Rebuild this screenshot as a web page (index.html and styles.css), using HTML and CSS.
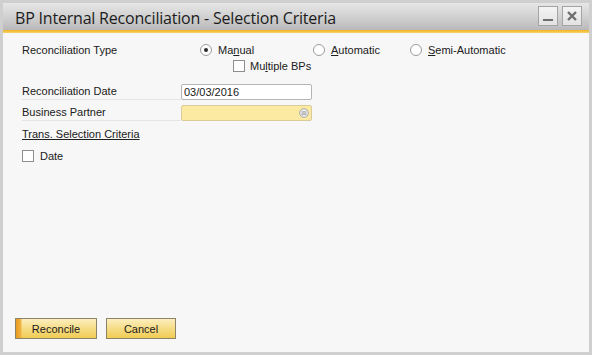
FILE: index.html
```html
<!DOCTYPE html>
<html lang="en">

<head>
    <meta charset="UTF-8">
    <title>BP Internal Reconciliation - Selection Criteria</title>
    <link rel="stylesheet" href="styles.css">
</head>

<body>
    <div class="window">
        <div class="titlebar">
            <span class="title">BP Internal Reconciliation - Selection Criteria</span>
            <div class="winbtns">
                <span class="winbtn min"></span>
                <span class="winbtn close">
                    <svg width="12" height="12" viewBox="0 0 12 12">
                        <path d="M2 2 L10 10 M10 2 L2 10" stroke="#6e6e6e" stroke-width="2.4" />
                    </svg>
                </span>
            </div>
        </div>
        <div class="accent"></div>

        <div class="content">
            <div class="row">
                <span class="label">Reconciliation Type</span>
                <span class="radio r1"><i class="dot on"></i>Ma<u>n</u>ual</span>
                <span class="radio r2"><i class="dot"></i><u>A</u>utomatic</span>
                <span class="radio"><i class="dot"></i><u>S</u>emi-Automatic</span>
            </div>
            <div class="row multi">
                <span class="check"><i class="box"></i>Mu<u>l</u>tiple BPs</span>
            </div>
            <div class="row field date">
                <span class="label line">Reconciliation Date</span>
                <span class="input">03/03/2016</span>
            </div>
            <div class="row field bp">
                <span class="label line">Business Partner</span>
                <span class="input yellow">
                    <svg class="cfl" width="10" height="10" viewBox="0 0 10 10">
                        <circle cx="5" cy="5" r="4.3" fill="#eeeeee" stroke="#a9a9a9" stroke-width="1" />
                        <path d="M2.5 3.8 H7.5 M2.5 5.2 H7.5 M2.5 6.6 H7.5" stroke="#9a9a9a" stroke-width="0.8" />
                    </svg>
                </span>
            </div>
            <div class="row crit">
                <span class="link">Trans. Selection Criteria</span>
            </div>
            <div class="row datechk">
                <span class="check"><i class="box"></i>Date</span>
            </div>
        </div>

        <div class="footer">
            <button class="btn default">Reconcile</button>
            <button class="btn">Cancel</button>
        </div>
    </div>
</body>

</html>
```

FILE: styles.css
```css
* {
    box-sizing: border-box;
    margin: 0;
    padding: 0;
}
body {
    background-color: #ffffff;
    font-family: "Liberation Sans", Arial, sans-serif;
    font-size: 11px;
    color: #202020;
}
.window {
    width: 592px;
    height: 355px;
    border: solid 3px #cfcfcf;
    background-color: #f7f7f7;
    display: flex;
    flex-direction: column;
}
.titlebar {
    height: 27px;
    display: flex;
    align-items: center;
    justify-content: space-between;
    padding-left: 12px;
    padding-right: 7px;
    background: linear-gradient(#e6e6e6, #cfcfcf 55%, #b9b9b9);
}
.title {
    font-family: "Open Sans", sans-serif;
    font-size: 16px;
    color: #1c1c1c;
    letter-spacing: -0.2px;
    padding-top: 2px;
}
.winbtns {
    display: flex;
    gap: 4px;
    align-self: flex-start;
    margin-top: 3px;
}
.winbtn {
    width: 20px;
    height: 20px;
    border: solid 1px #a4a4a4;
    background: linear-gradient(#f4f4f4, #e2e2e2);
    display: flex;
    align-items: center;
    justify-content: center;
}
.winbtn.min {
    align-items: flex-end;
    padding-bottom: 4px;
}
.winbtn.min::after {
    content: "";
    width: 10px;
    height: 2px;
    background-color: #6e6e6e;
}
.accent {
    height: 3px;
    background: linear-gradient(#f0b323, #f7d36a);
}
.content {
    flex: 1;
    padding: 9px 0 0 19px;
}
.row {
    display: flex;
    align-items: center;
    height: 16px;
}
.label {
    width: 159px;
}
.radio,
.check {
    display: flex;
    align-items: center;
}
.r1 {
    margin-left: 19px;
    width: 113px;
}
.r2 {
    width: 97px;
}
.dot {
    width: 12px;
    height: 12px;
    border: solid 1px #9c9c9c;
    border-radius: 50%;
    background-color: #ffffff;
    margin-right: 6px;
    display: flex;
    align-items: center;
    justify-content: center;
}
.dot.on::after {
    content: "";
    width: 4px;
    height: 4px;
    border-radius: 50%;
    background-color: #2a2a2a;
}
.box {
    width: 12px;
    height: 12px;
    border: solid 1px #8e8e8e;
    background-color: #ffffff;
    margin-right: 6px;
}
.multi {
    padding-left: 211px;
}
.multi .box {
    margin-right: 5px;
}
.date {
    margin-top: 10px;
}
.bp {
    margin-top: 5px;
}
.line {
    height: 16px;
    line-height: 15px;
    border-bottom: solid 1px #e4e4e4;
}
.input {
    width: 131px;
    height: 16px;
    border: solid 1px #b4b4b4;
    border-radius: 2px;
    background-color: #ffffff;
    padding-left: 2px;
    line-height: 14px;
    display: flex;
    align-items: center;
    justify-content: flex-end;
}
.date .input {
    justify-content: flex-start;
}
.input.yellow {
    background-color: #fce9a2;
    border-color: #d9cc9a;
    padding-right: 2px;
}
.crit {
    margin-top: 5px;
}
.link {
    text-decoration: underline;
}
.datechk {
    margin-top: 6px;
}
.footer {
    display: flex;
    gap: 9px;
    padding: 0 0 13px 12px;
}
.btn {
    width: 82px;
    height: 21px;
    border: solid 1px #8d8468;
    background: linear-gradient(#fcefbf, #f6dc85 50%, #f1cc55);
    font-family: "Liberation Sans", Arial, sans-serif;
    font-size: 11px;
    color: #202020;
}
.btn + .btn {
    width: 70px;
}
.btn.default {
    background: linear-gradient(90deg, #e99a1e, #f1b543 5px, transparent 6px),
        linear-gradient(#fcefbf, #f6dc85 50%, #f1cc55);
}
```
